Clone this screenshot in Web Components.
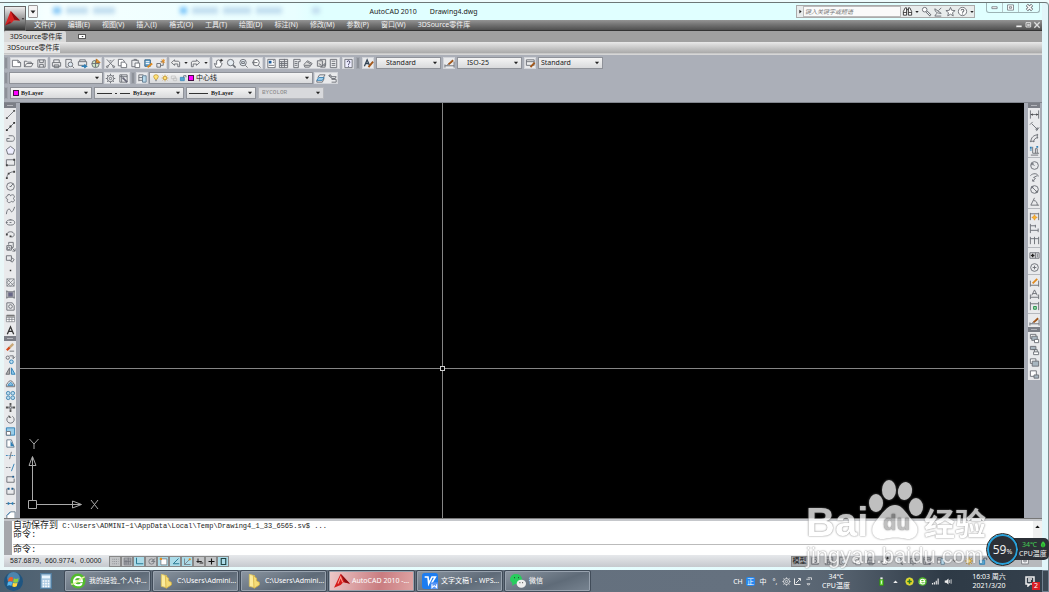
<!DOCTYPE html>
<html lang="zh-CN">
<head>
<meta charset="utf-8">
<title>AutoCAD 2010 Drawing4.dwg</title>
<style>
html,body{margin:0;height:100%;overflow:hidden}
body{font:7px/10px "Noto Sans","Noto Sans CJK SC",sans-serif;color:#222}
</style>
</head>
<body>
<cad-desktop></cad-desktop>
<script>
const BASE = `<style>
:host{box-sizing:border-box;display:block}
*{box-sizing:border-box}
button,input,select{font:inherit;color:inherit;margin:0;padding:0;border:0;background:none;border-radius:0;outline:0;min-width:0}
button{display:flex;align-items:center;justify-content:center;cursor:default}
</style>`;
const define = (name, render) => customElements.define(name, class extends HTMLElement {
  connectedCallback() {
    if (this.shadowRoot) return;
    const t = document.createElement('template');
    t.innerHTML = BASE + render(this);
    this.attachShadow({mode: 'open'}).append(t.content.cloneNode(true));
  }
});

const B = '#2f7fb5', O = '#e08a1e';
const ICONS = {
  new: '<path d="M1.500 2.500H7.500L10.500 5V9.500H1.500ZM7.500 2.500V5H10.500" fill="#fff"/>',
  open: '<path d="M1.500 9.500V3.500H4L5 4.500H9V6M1.500 9.500L4 6H11L9 9.500Z" fill="#eee"/>',
  save: '<path d="M2 2H10V10H2ZM4 2V5H8V2M4 10V7H8V10"/>',
  print: '<path d="M3 5V2H9V5M1.500 5H10.500V9H1.500ZM3.500 7.500H8.500V10.500H3.500Z"/>',
  preview: '<path d="M8 4V1.500H2V10H5"/><circle cx="7" cy="7" r="2.500" fill="#dfe9f2"/><path d="M9 9L11 11"/>',
  publish: `<path d="M3 4V2H9V4M1.500 4H10.500V8H1.500Z"/><path d="M5 9H10L8 7M10 9L8 11" stroke="${B}" stroke-width="1.500"/>`,
  globe: '<circle cx="6" cy="6.500" r="4" fill="#cfe5c6"/><path d="M2 6H10M6 3V10"/><path d="M7 1L11 5L7 5Z" fill="#e9a13b" stroke="#b76d19"/>',
  cut: '<path d="M2 1.500L9 9M10 1.500L3 9M5 3H7"/><circle cx="2.500" cy="9.500" r="1"/><circle cx="9.500" cy="9.500" r="1"/>',
  copy: '<path d="M1.500 1.500H6L8 3.500V8.500H1.500Z" fill="#fff"/><path d="M4.500 4.500H8L10.500 6.500V10.500H4.500Z" fill="#fff"/>',
  paste: '<path d="M2 2.500H9V9.500H2ZM4 1.500H7V3"/><path d="M5.500 5.500H10.500V10.500H5.500Z" fill="#fff"/>',
  match: `<path d="M2 2H8V9H2Z" fill="#6fa8d0" stroke="#315d80"/><path d="M3 4H7M3 6H7" stroke="#fff"/><path d="M5 10L10 6" stroke="${O}" stroke-width="2"/>`,
  block: `<path d="M2 6H6V10H2ZM6 8H9V4H6"/><path d="M7 2L11 5M11 2L7 5M9 1V6" stroke="${O}"/>`,
  undo: '<path d="M5 2L1.500 5L5 8V6.500H8.500V9.500H10.500V4.500L9 3.500H5Z" fill="#eee"/>',
  redo: '<path d="M7 2L10.500 5L7 8V6.500H3.500V9.500H1.500V4.500L3 3.500H7Z" fill="#eee"/>',
  down: '<path d="M3.500 4.500H8.500L6 7.500Z" fill="#222" stroke="none"/>',
  pan: '<path d="M3 10L1.500 6L4 7V3L6 2L8 3V5L10 6L8 10Z" fill="#fff"/><path d="M9 1V4M7.500 2.500H11" stroke="#222"/>',
  zoom: '<circle cx="5" cy="5" r="3.500" fill="#e6edf3"/><path d="M7.500 7.500L10.500 10.500" stroke-width="1.600"/>',
  zoomwin: '<circle cx="5.500" cy="5" r="3.500" fill="#e6edf3"/><path d="M4 4H7V6H4ZM8 8L10.500 10.500"/>',
  zoomprev: '<circle cx="5.500" cy="5" r="3.500" fill="#fff"/><path d="M8 8L10.500 10.500M7 5H2L4 3M2 5L4 7"/>',
  props: '<path d="M2 1.500H10V10.500H2Z" fill="#fff"/><path d="M3 3H6V6H3Z" fill="#1f5d9c" stroke="none"/><path d="M7.500 3H9M7.500 5H9M3 8H9"/>',
  grid: '<path d="M1.500 1.500H10.500V10.500H1.500ZM1.500 4H10.500M1.500 6H10.500M1.500 8H10.500M4 4V10M7 1V10"/>',
  palette: '<path d="M3 1.500H10V4H8V10.500H3ZM4 4H7M4 6H7M4 8H7"/>',
  sheets: '<path d="M1 7L5 3L10 6L7 10H2ZM2 8H8M4 4L9 7" fill="#ddd"/>',
  markup: '<path d="M1.500 3H7V9H1.500ZM4 1.500H10.500V8H8M3 6L6 8M5 10H10V6Z" fill="#ddd"/>',
  calc: '<path d="M2.500 1.500H9.500V10.500H2.500ZM4 3.500H8M4 6H8M4 8H8"/>',
  help: '<path d="M2 1.500H10V10.500H2Z" fill="#eef"/><path d="M4.500 4.500C4.500 2.500 7.500 2.500 7.500 4.500C7.500 6 6 5.500 6 7.500M6 8.500V9.500" stroke="#335"/>',
  textstyle: '<path d="M1.500 9L4.500 2L7 8M3 6H6" stroke-width="1.400" stroke="#345"/><path d="M6 10L11 4" stroke="#a2571a" stroke-width="2"/>',
  dimstyle: '<path d="M1 8.500H11M1 7V10.500M11 4V10.500M3 8L9 4"/><path d="M5 7L10 2.500" stroke="#a2571a" stroke-width="2"/>',
  tablestyle: '<path d="M1.500 2H10V8H1.500ZM1.500 4H10" fill="#eee"/><path d="M6 10L10.500 5" stroke="#a2571a" stroke-width="2"/>',
  gear: '<circle cx="6" cy="6" r="3.500"/><circle cx="6" cy="6" r="1.300"/><path d="M6 .8V2.500M6 9.500V11.200M.8 6H2.500M9.500 6H11.200M2.300 2.300L3.500 3.500M8.500 8.500L9.700 9.700M9.700 2.300L8.500 3.500M2.300 9.700L3.500 8.500"/>',
  workspace: '<path d="M2 2H10V10H2ZM2 4H10M4 2V10"/><path d="M5 5L10 10" stroke-width="1.800" stroke="#667"/>',
  layers: `<path d="M2 2H7M2 5H7M2 8H7M2 2V9" /><path d="M6 3H10V10H6Z" fill="#b9dbed" stroke="#607c90"/>`,
  bulb: '<path d="M4.500 8C4.500 6 2.500 6 2.500 4A3.500 3 0 0 1 9.500 4C9.500 6 7.500 6 7.500 8Z" fill="#ffe37a" stroke="#b88b1c"/><path d="M4.500 10H7.500"/>',
  sun: '<circle cx="6" cy="6" r="2.500" fill="#ffe37a" stroke="#c18b17"/><path d="M6 1V3M6 9V11M1 6H3M9 6H11M2.500 2.500L4 4M8 8L9.500 9.500M9.500 2.500L8 4M2.500 9.500L4 8" stroke="#c18b17"/>',
  vp: '<path d="M2 3H8V7H2ZM5 6H10V10H5Z" stroke="#bbb"/>',
  lock: `<path d="M2 5H8V10H2Z" fill="#58a7d1" stroke="${B}"/><path d="M7 5V2.500H10.500V5" stroke="#456"/>`,
  layerprev: `<path d="M2 8L4 5H10L8 8Z" fill="#a9d4ee" stroke="${B}"/><path d="M3 5L5 2H11L9 5M2 8V10H8L10 6"/>`,
  layerstate: '<path d="M4 4H10L9 6H5ZM5 7H10V10H5M4 1L2 3L4 5M2 3H5"/>',
  line: '<path d="M2 10L10 2"/><path d="M1 9H3V11H1ZM9 1H11V3H9Z" fill="#555" stroke="none"/>',
  xline: '<path d="M1.500 10.500L10.500 1.500"/><path d="M1 9H3V11H1ZM9 1H11V3H9ZM5 5H7V7H5Z" fill="#333" stroke="none"/>',
  pline: '<path d="M4 3H8C11 3 11 9 8 9H2M2 9V6M2 6H5"/>',
  polygon: '<path d="M6 1.500L10.500 5L9 10H3L1.500 5Z" fill="#eef"/>',
  rect: '<path d="M1.500 3H10.500V9H1.500Z"/><path d="M1 8H3V10H1ZM9 2H11V4H9Z" fill="#444" stroke="none"/>',
  arc: '<path d="M2 10C2 6 5 3 10 3"/><path d="M1 9H3V11H1ZM9 2H11V4H9ZM3 4H5V6H3Z" fill="#444" stroke="none"/>',
  circle: '<circle cx="6" cy="6" r="4.200"/><path d="M6 6L9 3M5 6H7"/>',
  cloud: '<path d="M3 2C5 1 6 2 6 3C9 0 12 4 9 6C12 8 9 11 7 9C5 12 1 10 3 7C0 6 1 3 3 3Z"/>',
  spline: '<path d="M1.500 10C2 4 5 3 6 6S9 7 10.500 2"/>',
  ellipse: '<ellipse cx="6" cy="6" rx="4.500" ry="2.800"/><path d="M5 3H7M5 6H7M1 6H3"/>',
  earc: '<path d="M2 6C2 2 10 2 10 6C10 9 7 9 6 8"/><path d="M1 5H3V7H1ZM5 7H7V9H5Z" fill="#444" stroke="none"/>',
  insert: '<path d="M2 5H7V10H2ZM4 4V1.500H9V7H7"/><circle cx="4" cy="8" r="1.500"/><path d="M8 8L11 11M11 8V11H8"/>',
  mkblock: '<path d="M1.500 3H7V8H1.500ZM7 5L10 7L8 10L5 8"/>',
  point: '<path d="M5.200 5.200H6.800V6.800H5.200Z" fill="#333" stroke="none"/>',
  hatch: '<path d="M2 2H10V10H2ZM2 6L6 2M2 10L10 2M6 10L10 6M2 2L10 10M2 6L6 10" stroke-width=".7"/>',
  gradient: '<path d="M1.500 3H10.500M1.500 9H10.500M2 1.500V10.500M10 1.500V10.500"/><path d="M3.500 4H8.500V8H3.500Z" fill="#668" stroke="#778"/>',
  region: '<path d="M2 2H8L10 5V10H2Z"/><circle cx="6" cy="6" r="2"/>',
  table: '<path d="M1.500 2.500H10.500V9.500H1.500ZM1.500 5H10.500M1.500 7H10.500M4.500 5V9.500M7.500 5V9.500" fill="#fff" stroke-width=".7"/><path d="M2 2H10V4H2Z" fill="#777" stroke="none"/>',
  mtext: '<path d="M2.500 10L6 2L9.500 10M4 7H8" stroke="#333" stroke-width="1.400"/>',
  erase: '<path d="M4 7L9 2" stroke="#c8a878" stroke-width="2.500"/><path d="M2 9L5 6" stroke="#d54c1f" stroke-width="2.500"/><path d="M5 10H10"/>',
  cpy: `<circle cx="3" cy="4" r="1.800"/><circle cx="7" cy="8.500" r="2" stroke="${B}" fill="#bfe0f2"/><path d="M5 2H9V5M8 4L9 5L11 3"/>`,
  mirror: `<path d="M5 2V9H1Z" fill="#aaa"/><path d="M7 2V9H11Z" fill="#8fc9ea" stroke="${B}"/>`,
  offset: `<path d="M1.500 9.500H10.500V7C9 7 9 3 6 3S3 7 1.500 7Z"/><path d="M3 8H9C8 6 7 5 6 5S4 7 3 8Z" fill="#8fc9ea" stroke="${B}"/>`,
  array: `<g fill="#b9dcf0" stroke="#4385b0"><circle cx="3.500" cy="3.500" r="2"/><circle cx="8.500" cy="3.500" r="2"/><circle cx="3.500" cy="8.500" r="2"/><circle cx="8.500" cy="8.500" r="2"/></g>`,
  move: '<path d="M6 1V4M6 8V11M1 6H4M8 6H11" stroke-width="2" stroke="#555"/><path d="M5 5H7V7H5Z"/>',
  rotate: '<path d="M4 2.500A4 4 0 1 0 8 2.500"/><path d="M4 1V4H7Z" fill="#555" stroke="none"/>',
  scale: `<path d="M1.500 2H10.500V10H1.500Z" fill="#9acde8" stroke="${B}"/><path d="M1.500 6H6V10H1.500Z" fill="#fff"/>`,
  stretch: `<path d="M2 10V2H7L10 10Z" stroke="#678" fill="#fff"/><path d="M6 3L10 9H6Z" fill="${B}" stroke="none"/>`,
  trim: `<path d="M5 10L7 2"/><path d="M1 6H5M7 6H11" stroke="${B}" stroke-dasharray="2 1"/>`,
  extend: `<path d="M1 6H7" stroke-dasharray="2 1"/><path d="M7 10L10 2" stroke="${B}"/>`,
  break1: '<path d="M9 3H2V9H10V5"/><path d="M8 2H10V4H8Z" fill="#24608f" stroke="none"/>',
  break2: '<path d="M3 3H2V9H10V3H9"/><path d="M3 2H5V4H3ZM7 2H9V4H7Z" fill="#24608f" stroke="none"/>',
  join: `<path d="M1 6H11"/><path d="M3 4L6 6L3 8ZM9 4L6 6L9 8Z" fill="${B}" stroke="none"/>`,
  chamfer: `<path d="M2 11V6L6 2H11V11Z" fill="#fff" stroke="#678"/><path d="M2 6L6 2" stroke="${B}"/>`,
  dlinear: '<path d="M1.500 1.500V10.500M10.500 1.500V10.500M1.500 6H10.500"/><path d="M2 6L4 4.500V7.500ZM10 6L8 4.500V7.500Z" fill="#444" stroke="none"/>',
  daligned: '<path d="M3 3L9 9M1 4L4 1M8 11L11 7M9 7V9H7"/>',
  darc: '<path d="M2 10C2 5 5 2 10 2M5 10C5 7 7 5 10 5M1 9H6M9 1V6"/>',
  dord: `<path d="M4 2V9H11M7 9V4H9V9M2 11H10"/><path d="M2 2V6M8 2H11" stroke="${B}" stroke-width="2" stroke-dasharray="2 1"/>`,
  dradius: '<circle cx="6" cy="6" r="4.200"/><path d="M6 6L3 4M3 6V4H5"/>',
  djog: '<path d="M1.500 4C4 1 10 1 10 5M9 4L5 6L7 7L4 10M4 10V8M4 10H6"/>',
  ddia: '<circle cx="6" cy="6" r="4.200"/><path d="M3 3L9 9M3 5V3H5M9 7V9H7"/>',
  dang: '<path d="M2 10H11M2 10L6 2M5 5C8 5 9 7 9 10"/>',
  dquick: `<path d="M1.500 2V10M10.500 2V10M1.500 3H10.500"/><path d="M6 4L7 6L9 7L7 8L6 10L5 8L3 7L5 6Z" fill="#f8b52e" stroke="${O}" stroke-width=".7"/>`,
  dbase: '<path d="M1.500 1V11M7 2V5M10 6V10M1.500 3H7M1.500 8H10"/>',
  dcont: '<path d="M1.500 2V10M6 2V10M10.500 2V10M1.500 4H10.500"/>',
  tol: '<path d="M1 3H11V9H1ZM7 3V9M9 4V8"/><path d="M4 4V8M2 6H6" stroke-width="1.500" stroke="#222"/>',
  center: '<circle cx="6" cy="6" r="4.200"/><path d="M6 4V8M4 6H8"/>',
  dedit: `<path d="M1.500 4V10.500M10.500 4V10.500M1.500 9H10.500"/><path d="M4 7L9 2" stroke="${O}" stroke-width="2"/>`,
  dtext: '<path d="M1.500 6V11M10.500 6V11M1.500 9H10.500M3 7L6 1L9 7M4 5H8"/>',
  dupd: '<path d="M1.500 1V10M10.500 1V10M1.500 3H10.500"/><path d="M5 6H8V9H5Z" stroke="#218c46" fill="#9fd8ac"/>',
  front: '<path d="M1.500 1.500H7.500V6H1.500Z" fill="#fff"/><path d="M3 3.500H9V8H3Z" fill="#a8b6c0"/><path d="M6 7H10.500V10.500H6Z" fill="#fff"/>',
  above: '<path d="M1.500 1.500H7.500V5H1.500Z" fill="#a8b6c0"/><path d="M6 5V9M4 5H9V8" /><path d="M5 7.500H10.500V10.500H5Z" fill="#fff"/>',
  back: '<path d="M1.500 2H7.500V7H1.500Z" fill="#fff"/><path d="M3.500 4.500H10.500V10H3.500Z" fill="#a8b6c0"/>',
  below: '<path d="M1.500 2H8V8H1.500Z" fill="#fff"/><path d="M5.500 6.500H10.500V10H5.500Z" fill="#a8b6c0"/>',
  snap: '<path d="M2 3H10M2 6H10M2 9H10" stroke-dasharray="1 1.500"/>',
  ortho: '<path d="M2 1V9H11" stroke="#267790" stroke-width="1.300"/>',
  polar: '<circle cx="6" cy="6" r="3.500"/><path d="M6 6L11 2M6 6H11"/>',
  osnap: `<path d="M2.500 2.500H10.500V10.500H2.500Z" fill="#fff"/><path d="M1 1H4V4H1Z" fill="${O}" stroke="none"/>`,
  angle: '<path d="M10 2L3 9H11" stroke="#267790" stroke-width="1.300"/>',
  ducs: `<path d="M2 2V10H10M2 10L8 4"/><circle cx="9" cy="3" r="1.500" fill="${O}" stroke="none"/>`,
  dyn: '<path d="M4 2V8M2 6H9M6 8H11" stroke-width="1.300" stroke="#222"/>',
  plus: '<path d="M6 2V10M2 6H10" stroke-width="1.500" stroke="#111"/>',
  box: '<path d="M3 2H9V10H3Z" stroke-width="1.500" stroke="#244"/>',
  binoc: '<path d="M1.500 10V6L3.500 2H5V10ZM7 10V2H8.500L10.500 6V10ZM5 4H7M1.500 7H5M7 7H10.500" fill="#fff" stroke="#333"/>',
  key: '<path d="M6 6L10.500 10.500" stroke-width="2.400"/><path d="M6 6L10 10" stroke="#fff"/><circle cx="4" cy="4" r="2.500" fill="#fff"/>',
  dish: '<path d="M2 3C2 7 5 8 9 8ZM6 5L9 2M4 8L2 11H9"/>',
  star: '<path d="M6 1.500L7.300 4.700L11 5L8.200 7.300L9 10.800L6 8.900L3 10.800L3.800 7.300L1 5L4.700 4.700Z" fill="#fff"/>',
  qmark: '<circle cx="6" cy="6" r="4.500" fill="#fff"/><path d="M4.500 5C4.500 3 7.500 3 7.500 5C7.500 6 6 6 6 7.300M6 8.300V9.200" stroke-width="1.200"/>',
  min: '<path d="M2.500 5H9.500V7.500H2.500Z" fill="#fff"/>',
  max: '<path d="M2 2.500H10V9.500H2ZM4.500 5H7.500V7H4.500Z" fill="#fff"/>',
  close: '<path d="M2.500 2.500L9.500 9.500M9.500 2.500L2.500 9.500" stroke-width="4"/><path d="M3 3L9 9M9 3L3 9" stroke="#fff" stroke-width="2"/>',
  wmin: '<path d="M2 8H10" stroke="#eee" stroke-width="2.500"/>',
  wmax: '<path d="M3 2.500H10V9H3ZM5.500 5H8V7H5.500Z" stroke="#eee" stroke-width="1.300"/>',
  wclose: '<path d="M2 2L10 10M10 2L2 10" stroke="#ddd" stroke-width="2"/>',
  win: '<circle cx="6" cy="6" r="6" fill="#1f5580" stroke="none"/><circle cx="6" cy="4" r="4" fill="#5f9ac0" stroke="none" opacity=".7"/><path d="M3 4C4 3 5 3 5.800 3.800L5.300 6C4.500 5.500 3.500 5.500 2.500 6Z" fill="#f05b25" stroke="none"/><path d="M6.300 4C7 4.500 8 4.500 9.200 4L8.700 6.300C7.500 7 6.500 6.800 5.800 6.300Z" fill="#8fd03a" stroke="none"/><path d="M2.400 6.500C3.400 6 4.300 6 5.200 6.500L4.700 8.800C3.800 8.300 3 8.300 2 8.800Z" fill="#54b8f0" stroke="none"/><path d="M5.700 6.800C6.500 7.300 7.500 7.300 8.600 6.800L8 9C7 9.700 6 9.600 5.200 9Z" fill="#ffd83b" stroke="none"/>',
  calculator: '<path d="M2 .5H10V11.500H2Z" fill="#a9c9e2" stroke="#527c9e"/><path d="M3 2H9V4H3Z" fill="#eaf6ff" stroke="none"/><path d="M3.500 6H8.500M3.500 8H8.500M3.500 10H8.500" stroke="#fff" stroke-dasharray="1.200 .7" stroke-width="1.200"/>',
  browser: '<circle cx="6" cy="6" r="5.700" fill="#52bb2d" stroke="none"/><path d="M3 6.200H9C9 2 3 2 3 6.200C3 10 8 10 8.800 7.600" stroke="#fff" stroke-width="1.500"/><path d="M1 8C2 10 9 3 11 3" stroke="#e8f7a0"/>',
  folder: '<path d="M2.500 1L6.500 2V11L2.500 10Z" fill="#fbeb9c" stroke="#dcc259" stroke-width=".6"/><path d="M5.500 2L8 4V6L10 7V9L6 11.500Z" fill="#f5dc78" stroke="#d6b344" stroke-width=".6"/>',
  acad: '<path d="M0 11L5 .5L12 8L7 7L5 9Z" fill="#d51c1c" stroke="none"/><path d="M5 .5L12 8L8 7Z" fill="#8d0e12" stroke="none"/><path d="M3 8L5 3L6.500 7" stroke="#ff9d8f" stroke-width=".8"/>',
  acadbig: '<path d="M0 11.500L4.500 0L12 7.500L7 7.500L5 9.500L4 8Z" fill="#d92323" stroke="none"/><path d="M4.500 0L12 7.500L7.500 7Z" fill="#8d0e12" stroke="none"/><path d="M0 11.500L4 8L5 9.500Z" fill="#a01115" stroke="none"/>',
  wps: '<rect width="12" height="12" rx="2" fill="#1d7df0" stroke="none"/><path d="M2 3H4.500L5 8L7.500 3H10L7 8" stroke="#fff" stroke-width="1.200"/><path d="M6.500 7H12V12H6.500Z" fill="#5a96f5" stroke="none"/><path d="M7.500 8.500V11L9.200 9.500L11 11V8.500" stroke="#fff" stroke-width=".8"/>',
  wechat: '<ellipse cx="4.500" cy="4.500" rx="4.500" ry="3.800" fill="#27cd5d" stroke="none"/><path d="M2 7L1.500 9.500L4 8Z" fill="#27cd5d" stroke="none"/><ellipse cx="8.500" cy="8" rx="3.500" ry="3" fill="#eee" stroke="none"/><path d="M3 3.500H3.500M6 3.500H6.500M7.200 7.200H7.700M9.300 7.200H9.800" stroke="#222"/>',
  usb: '<path d="M3.500 3H8.500V11.500H3.500Z" fill="#6ad93b" stroke="#2c7a16"/><path d="M4.500 .5H7.500V3H4.500Z" fill="#eee" stroke="none"/><path d="M6 5V9" stroke="#fff"/>',
  up: '<path d="M3 8H9L6 4.500Z" fill="#eee" stroke="none"/>',
  shield: '<circle cx="6" cy="6" r="5" fill="#f4d326" stroke="#b8d84a"/><path d="M6 3V9M3 6H9" stroke="#277c25" stroke-width="2"/>',
  signal: '<path d="M2 10V8M4.500 10V7M7 10V5M9.500 10V2" stroke="#eee" stroke-width="1.500"/>',
  sound: '<path d="M1 4.500H3L6 2V10L3 7.500H1Z" fill="#eee" stroke="none"/><path d="M7.500 4V8M9.500 3V9" stroke="#eee"/>',
  wgear: '<circle cx="6" cy="6" r="4" stroke="#eee"/><circle cx="6" cy="6" r="1.500" stroke="#eee"/><path d="M6 .5V2M6 10V11.500M.5 6H2M10 6H11.500M2 2L3 3M9 9L10 10M10 2L9 3M2 10L3 9" stroke="#eee"/>',
  wedit: '<path d="M2 2V10H10M4 8L9 3M7 2H10V5" stroke="#eee" stroke-width="1.300"/>',
  wlang: '<path d="M3 3H8M5 1H10V4M4 9H8L6 11Z" stroke="#eee"/>',
  notice: '<path d="M2 2H10V9H6L4 11V9H2ZM4 4H8M4 6H7" stroke="#eee" stroke-width="1.500"/>',
  leaf: '<path d="M6 1C10 4 11 8 7 10H5C1 8 3 4 6 1Z" fill="#39c83d" stroke="none"/><path d="M6 5V11.500" stroke="#137c1a"/>'
};

define('cad-icon', el => `<style>:host{flex:none;width:12px;height:12px}svg{display:block;width:100%;height:100%}</style>
<svg viewBox="0 0 12 12" fill="none" stroke="#6b6f75" stroke-width="1" aria-hidden="true">${ICONS[el.getAttribute('name')] || ''}</svg>`);

define('tool-button', el => `<style>:host{flex:none;width:12px;height:12px}button{width:100%;height:100%}cad-icon{width:var(--icon,11px);height:var(--icon,11px)}</style>
<button type="button" aria-label="${el.getAttribute('icon')}"><cad-icon name="${el.getAttribute('icon')}"></cad-icon></button>`);

define('tool-group', el => `<style>:host{display:flex;height:12px;flex:none;align-items:center;justify-content:space-around;background:#e9eaec;box-shadow:0 0 0 1px #d2d4d9 inset}
:host([clear]){background:none;box-shadow:none}</style>
${el.getAttribute('icons').split(' ').map(i => `<tool-button icon="${i}" ${i === 'down' ? 'style="width:7px;--icon:8px"' : ''}></tool-button>`).join('')}`);

define('tool-grip', () => `<style>:host{flex:none;width:4px;height:12px;background:#8d9199;border:1px solid #a1a5ad}:host([flat]){width:auto;height:5px;border-width:2px 3px;border-color:#7b7e86;background:#b3b5bb}</style>`);

define('cad-combo', el => `<style>
:host{display:flex;align-items:center;height:12px;flex:none;background:linear-gradient(#f4f4f4,#d9dadc);border:1px solid #8f9299;padding:0 0 0 2px}
:host([disabled]){color:#888;background:#d8d9dc;border-color:#b5b7bc}
select{appearance:none;flex:1;height:10px;line-height:10px;padding:0 0 0 var(--indent,0);width:0}
select:disabled{opacity:1}
cad-icon{width:10px;height:10px}</style>
<slot></slot><select aria-label="${el.getAttribute('label')}" ${el.hasAttribute('disabled') ? 'disabled' : ''}><option>${el.getAttribute('value') || ''}</option></select><cad-icon name="down"></cad-icon>`);

define('app-header', () => `<style>
:host{display:grid;grid-template:17px 11px/22px 1fr;background:linear-gradient(90deg,#e0fdff,#f6ffff 4%,#e9feff 28%,#e0ffff 30%)}
.app{grid-row:1/3;margin-top:3px;background:linear-gradient(#eee,#888 60%,#333);border:1px solid #666}
.app cad-icon:first-child{width:15px;height:19px}.app cad-icon:last-child{width:6px;height:6px}
.title{display:flex;align-items:center;padding-left:2px;position:relative;min-width:0}
.quick{width:10px;height:13px;border:1px solid #999;background:#f5f5f5;border-radius:1px}
.ghost{position:absolute;left:27px;top:4px;display:flex;gap:5px;filter:blur(2px)}
.ghost i{display:block;height:7px;background:#c3dff0}
.caption{flex:1;display:flex;justify-content:center;gap:13px;color:#222;padding-left:13px;white-space:nowrap}
form{display:flex;align-items:center;height:13px;width:179px;border:1px solid #aaa;background:#e8ecec}
form>button{width:6px}form>button cad-icon{width:9px;height:9px;transform:rotate(-90deg)}
input{flex:1;height:11px;background:#fafafa;font:italic 6px/10px "Noto Sans CJK SC",sans-serif;border:1px solid #bbb;padding:0 1px}
input::placeholder{color:#777;opacity:1}
tool-group{height:11px;width:73px}
.win{display:flex;align-self:flex-start;width:54px;height:10px;margin:0 2px 0 11px;border:1px solid #9cb3b5;border-top:0;border-radius:0 0 3px 3px}
.win button{flex:1;border-right:1px solid #b5c7c9}.win button:last-child{border:0;flex:1.3}.win cad-icon{width:9px;height:9px}
nav{display:flex;align-items:center;background:linear-gradient(#949494,#747474 45%,#505050);color:#f2f2f2;padding-left:8px;line-height:10px;border-bottom:1px solid #333;gap:12px;white-space:nowrap}
nav a{color:inherit;text-decoration:none;min-width:21px}
.ctl{margin-left:auto;display:flex;gap:1px;padding-right:1px}.ctl cad-icon{width:8px;height:8px}
</style>
<button class="app" type="button" aria-label="AutoCAD"><cad-icon name="acadbig"></cad-icon><cad-icon name="down"></cad-icon></button>
<div class="title"><div class="ghost"><i style="width:8px;background:#8ccaf6"></i><i style="width:22px"></i><i style="width:22px"></i><i style="width:7px;margin-left:60px;background:#80c8fa"></i><i style="width:26px"></i><i style="width:28px"></i><i style="width:26px"></i><i style="width:8px;margin-left:25px"></i></div>
<button class="quick" type="button" aria-label="快速访问"><cad-icon name="down"></cad-icon></button>
<div class="caption"><span>AutoCAD 2010</span><span>Drawing4.dwg</span></div>
<form><button type="button" aria-label="展开"><cad-icon name="down"></cad-icon></button><input aria-label="搜索" placeholder="键入关键字或短语"><tool-group clear icons="binoc down key dish star qmark down"></tool-group></form>
<div class="win">${['min','max','close'].map(i => `<button type="button" aria-label="${i}"><cad-icon name="${i}"></cad-icon></button>`).join('')}</div></div>
<nav>${['文件(F)','编辑(E)','视图(V)','插入(I)','格式(O)','工具(T)','绘图(D)','标注(N)','修改(M)','参数(P)','窗口(W)','3DSource零件库'].map(t => `<a href="#">${t}</a>`).join('')}
<span class="ctl"><cad-icon name="wmin"></cad-icon><cad-icon name="wmax"></cad-icon><cad-icon name="wclose"></cad-icon></span></nav>`);

define('ribbon-tabs', () => `<style>
.tabs{display:flex;height:11px;background:#a0a0a0;align-items:center}
.tabs button:first-child{height:11px;width:62px;padding-left:2px;background:#d9d9d9;border-radius:2px 2px 0 0}
.drop{width:8px;height:5px;margin-left:12px;background:#fff;border:1px solid #555}.drop cad-icon{width:5px;height:5px}
.panel{display:flex;height:13px;background:linear-gradient(#e8e8e8,#a9a9a9 85%,#d6d6d6 90%)}
.panel span{width:56px;padding-left:3px;line-height:12px;background:#e6e6e6;white-space:nowrap;height:11px}</style>
<div class="tabs"><button type="button">3DSource零件库</button><button class="drop" type="button" aria-label="面板"><cad-icon name="down"></cad-icon></button></div>
<div class="panel"><span>3DSource零件库</span></div>`);

define('tool-bars', () => `<style>
:host{background:#abafb8;padding:2px 0 3px}
.row{display:flex;height:12px;gap:2px}.row+.row{margin-top:3px}
.row.tight{gap:1px}
i{flex:none;width:6px;height:6px;background:#f0f;border:1px solid #414;margin-right:2px}
hr{flex:none;border:0;border-top:1px solid #333;margin:0 3px 0 0}
.by{font:bold 6px/10px "Liberation Serif",serif}
.row cad-combo cad-icon{width:8px;height:8px;margin-right:1px}
</style>
<div class="row"><tool-grip></tool-grip>
<tool-group style="width:38px" icons="new open save"></tool-group>
<tool-group style="width:52px" icons="print preview publish globe"></tool-group>
<tool-group style="width:63px" icons="cut copy paste match block"></tool-group>
<tool-group style="width:41px" icons="undo down redo down"></tool-group>
<tool-group style="width:51px" icons="pan zoom zoomwin zoomprev"></tool-group>
<tool-group style="width:75px" icons="props grid palette sheets markup calc"></tool-group>
<tool-group style="width:12px" icons="help"></tool-group>
<tool-grip></tool-grip><tool-group style="width:12px" icons="textstyle"></tool-group>
<cad-combo label="文字样式" value="Standard" style="width:65px;--indent:7px"></cad-combo>
<tool-group style="width:12px" icons="dimstyle"></tool-group>
<cad-combo label="标注样式" value="ISO-25" style="width:65px;--indent:7px"></cad-combo>
<tool-group style="width:12px" icons="tablestyle"></tool-group>
<cad-combo label="表格样式" value="Standard" style="width:65px"></cad-combo></div>
<div class="row tight"><tool-grip></tool-grip><cad-combo label="工作空间" style="width:94px"></cad-combo>
<tool-group style="width:26px" icons="gear workspace"></tool-group><tool-grip></tool-grip>
<tool-group style="width:12px" icons="layers"></tool-group>
<cad-combo label="图层" value="中心线" style="width:164px"><cad-icon name="bulb"></cad-icon><cad-icon name="sun"></cad-icon><cad-icon name="vp"></cad-icon><cad-icon name="lock"></cad-icon><i></i></cad-combo>
<tool-group style="width:24px" icons="layerprev layerstate"></tool-group></div>
<div class="row by"><tool-grip></tool-grip>
<cad-combo label="颜色" value="ByLayer" style="width:82px"><i></i></cad-combo>
<cad-combo label="线型" value="ByLayer" style="width:90px"><hr style="width:15px"><hr style="width:2px"><hr style="width:10px"></cad-combo>
<cad-combo label="线宽" value="ByLayer" style="width:70px"><hr style="width:19px"></cad-combo>
<cad-combo disabled label="打印样式" value="BYCOLOR" style="width:66px;--indent:1px;font:6px/10px 'Liberation Mono',monospace"></cad-combo></div>`);

define('side-tools', el => `<style>:host{flex:none;width:12px;overflow:hidden;background:#e9eaec}
:host([fit]){align-self:flex-start}hr{margin:1px 0;border:0;border-top:1px solid #b5b8bd}</style>
${el.getAttribute('icons').split(' ').map(i => i === '=' ? '<tool-grip flat></tool-grip>' : i === '-' ? '<hr>' : `<tool-button icon="${i}"></tool-button>`).join('')}`);

define('drawing-area', () => `<style>
:host{position:relative;flex:1;min-width:0;background:#000;overflow:hidden}
.h,.v,.p{position:absolute;background:#858585}.h{left:0;right:0;top:265px;height:1px}.v{top:0;bottom:0;left:422px;width:1px}
.p{left:420px;top:263px;width:5px;height:5px;border:1px solid #ccc;background:#000}
svg{position:absolute;left:6px;bottom:5px;width:76px;height:76px}
</style><div class="h"></div><div class="v"></div><div class="p"></div>
<svg viewBox="0 0 76 76" fill="none" stroke="#aaa" aria-label="UCS"><path d="M2.500 63.500H10.500V71.500H2.500ZM6.500 63V28M11 67.500H46M6.500 19.500L10 28.500H3ZM55.500 67.500L46.500 64V71ZM6.500 20V28M47 67.500H55M3.500 2L8 7L12.500 2M8 7V12M65 63L72 72M72 63L65 72"/></svg>`);

define('command-line', () => `<style>
:host{display:flex;height:37px;border-top:1px solid #777;background:#c5c7cb;padding-top:2px}
.grip{width:8px;background:#a5a7ab}
.text{flex:1;background:#fff;font:9px/9px "Liberation Mono","Noto Sans CJK SC",monospace;color:#222;padding:1px 0 0 1px;white-space:pre;min-width:0}
small{font-size:7px}
.in{display:flex;align-items:center;border-top:1px solid #bbb;margin-top:4px;height:11px}
input{flex:1}
.scroll{width:9px;background:#f0f0f0;padding-top:1px}.scroll cad-icon{width:9px;height:9px;filter:invert(1)}
</style><div class="grip"></div><div class="text"><div>自动保存到<small> C:\\Users\\ADMINI~1\\AppData\\Local\\Temp\\Drawing4_1_33_6565.sv$ ...</small></div><div>命令:</div><label class="in">命令:<input aria-label="命令"></label></div>
<div class="scroll"><cad-icon name="up"></cad-icon></div>`);

define('status-bar', () => `<style>
:host{display:flex;align-items:center;height:12px;background:linear-gradient(#e6e8eb,#c6c9ce);padding-left:6px}
.pos{width:99px;font:7px/10px "Liberation Sans",sans-serif;white-space:nowrap}
.t,.r{display:flex;height:11px}.t tool-button{height:11px;border:1px solid #888;background:#c2c4c6;--icon:9px}
.t .on{background:#abdbe8}
.r{margin-left:auto;background:#b7b9bc;padding-right:10px;align-items:center}.r button{width:17px;background:#a5a8ab;border:1px solid #888;height:11px;color:#111}
.r tool-button{width:14px;height:11px;--icon:10px}
</style><span class="pos">587.6879,&nbsp; 660.9774,&nbsp; 0.0000</span>
<div class="t">${['snap','grid','ortho','polar','osnap','angle','ducs','dyn','plus','box'].map((n,i) => `<tool-button icon="${n}" class="${[2,4,5,6,9].includes(i) ? 'on' : ''}"></tool-button>`).join('')}</div>
<div class="r"><button type="button">模型</button>${'region grid preview copy print pan zoom gear workspace layers down sun lock mkblock down max'.split(' ').map(i => `<tool-button icon="${i}"></tool-button>`).join('')}</div>`);

define('task-button', el => `<style>
:host{flex:none;width:87px;height:22px}
button{width:100%;height:100%;justify-content:flex-start;padding-left:5px;gap:3px;border:1px solid #414c59;box-shadow:0 0 0 1px #98a2ae inset;border-radius:2px;background:linear-gradient(160deg,#8c96a2,#5f6b78 60%,#788491);color:#fff;white-space:nowrap}
:host([active]) button{background:linear-gradient(100deg,#eec9c9,#c97c80 60%,#dfa5a5);gap:2px}
cad-icon{width:16px;height:16px}</style>
<button type="button"><cad-icon name="${el.getAttribute('icon')}"></cad-icon><span><slot></slot></span></button>`);

define('task-bar', () => `<style>
:host{display:flex;align-items:center;height:22px;background:linear-gradient(90deg,#4a5f70,#626e7b 12%,#65717f 70%,#56626f 80%,#2e3a46 90%,#34404c);color:#fff}
.start,.calc{flex:none;width:20px;margin-left:3px}.start cad-icon{width:19px;height:19px}
.calc{margin:0 8px 0 13px}.calc cad-icon{width:16px;height:16px}
nav{display:flex;gap:1px}
.tray{margin-left:auto;display:flex;align-items:center;text-align:center;line-height:9px;white-space:nowrap}
.tray>*{flex:none}.ime{width:12px}.zh{background:#2688ee;width:9px;height:9px;border-radius:2px;margin:0 2px}
.tray cad-icon{width:9px;height:9px;margin:0 2px}
.tray cad-icon.s{margin:0 1px}
.temp{width:42px;margin:0 18px 0 1px}.clock{width:58px;margin-left:5px}
.note{position:relative;width:24px;display:flex;justify-content:center}.note cad-icon{width:12px;height:12px}
.note b{position:absolute;right:2px;bottom:-3px;width:8px;height:8px;background:#d81e25;line-height:8px;font-weight:400}
.desk{width:7px;height:22px;border:1px solid #718090;background:#3c4854}
</style><button class="start" type="button" aria-label="开始"><cad-icon name="win"></cad-icon></button>
<button class="calc" type="button" aria-label="计算器"><cad-icon name="calculator"></cad-icon></button>
<nav><task-button icon="browser">我的经验_个人中...</task-button><task-button icon="folder">C:\\Users\\Admini...</task-button><task-button icon="folder">C:\\Users\\Admini...</task-button><task-button active icon="acad">AutoCAD 2010 -...</task-button><task-button icon="wps">文字文稿1 - WPS...</task-button><task-button icon="wechat">微信</task-button></nav>
<div class="tray"><span class="ime">CH</span><span class="zh">正</span><span class="ime">中</span><span class="ime">°,</span><cad-icon class="s" name="wgear"></cad-icon><cad-icon class="s" name="wedit"></cad-icon><cad-icon class="s" name="wlang"></cad-icon>
<span class="temp">34℃<br>CPU温度</span><cad-icon name="usb"></cad-icon><cad-icon name="up" style="margin:0 3px"></cad-icon><cad-icon name="shield"></cad-icon><cad-icon name="browser"></cad-icon><cad-icon name="signal"></cad-icon><cad-icon name="sound"></cad-icon>
<span class="clock">16:03 周六<br>2021/3/20</span><span class="note"><cad-icon name="notice"></cad-icon><b>2</b></span><button class="desk" type="button" aria-label="显示桌面"></button></div>`);

define('water-mark', () => `<style>
:host{position:absolute;right:61px;bottom:24px;width:182px;height:90px;color:#fff;opacity:.75;pointer-events:none;text-shadow:0 0 1px #777,0 0 2px #777}
.logo{display:flex;align-items:flex-end;height:62px;white-space:nowrap}
.bai{font:bold 40px/36px "Liberation Sans",sans-serif;width:62px}
.paw{position:relative;width:56px;height:62px}.paw svg{display:block;width:56px;height:62px;overflow:visible;filter:drop-shadow(0 0 1px #777)}
.paw b{position:absolute;left:15px;top:32px;font:bold 22px/26px "Liberation Sans",sans-serif;color:#aaa}
.jy{font:bold 31px/36px "Noto Sans CJK SC",sans-serif}
.url{font:22px/24px "Liberation Sans",sans-serif;padding-top:4px}
</style><div class="logo"><span class="bai">Bai</span><div class="paw"><svg viewBox="0 0 56 62" fill="#fff"><ellipse cx="8" cy="25" rx="7" ry="9"/><ellipse cx="21" cy="12" rx="7" ry="10"/><ellipse cx="37" cy="13" rx="7" ry="9" transform="rotate(12 37 13)"/><ellipse cx="48" cy="29" rx="7" ry="9"/><path d="M27 27C35 27 39 37 46 44C53 51 49 62 39 61C31 59 24 59 16 61C4 62 1 51 8 43C14 36 19 27 27 27Z"/></svg><b>du</b></div><span class="jy">经验</span></div><div class="url">jingyan.baidu.com</div>`);

define('temp-widget', () => `<style>
:host{position:absolute;right:0;bottom:27px;display:flex;align-items:center;height:32px;color:#eee}
.ring{position:relative;display:flex;align-items:baseline;justify-content:center;width:31px;height:31px;margin-right:-17px;border-radius:50%;border:2px solid #28a2dc;outline:1px solid #222;background:#2c3037;font:12px/27px "Noto Sans",sans-serif}
.ring small{font-size:7px}
.pill{width:48px;height:22px;padding:2px 0 0 18px;border-radius:0 5px 5px 0;background:#2c3037;line-height:9px;white-space:nowrap}
.t{display:flex;gap:2px;padding-left:3px;color:#43cf54}.t cad-icon{width:8px;height:9px}
</style><div class="ring">59<small>%</small></div><div class="pill"><div class="t">34℃<cad-icon name="leaf"></cad-icon></div><div>CPU温度</div></div>`);

define('cad-desktop', () => `<style>
:host{display:flex;flex-direction:column;height:100vh;position:relative;background:#eefcfd}
.window{flex:1;min-height:0;display:flex;flex-direction:column;margin-top:2px;padding:0 6px 3px 4px;border-top:1px solid #6d7777;border-right:1px solid #7b8b8e;border-radius:0 4px 0 0;background:linear-gradient(90deg,#eaf7f8,#e6ffff 50%,#e2f6fa)}
.work{flex:1;min-height:0;display:flex;background:#a7abb5;border-top:1px solid #82868e}
drawing-area{margin:0 4px}
side-tools[fit]{margin-right:2px}
</style>
<div class="window"><app-header></app-header><ribbon-tabs></ribbon-tabs><tool-bars></tool-bars>
<div class="work"><side-tools icons="= line xline pline polygon rect arc circle cloud spline ellipse earc insert mkblock point hatch gradient region table mtext = erase cpy mirror offset array move rotate scale stretch trim extend break1 break2 join chamfer"></side-tools>
<drawing-area></drawing-area>
<side-tools fit icons="= dlinear daligned darc dord - dradius djog ddia dang - dquick dbase dcont - tol center - dedit dtext dupd - dimstyle = front above back below"></side-tools></div>
<command-line></command-line><status-bar></status-bar></div>
<task-bar></task-bar><water-mark></water-mark><temp-widget></temp-widget>`);
</script>
</body>
</html>
